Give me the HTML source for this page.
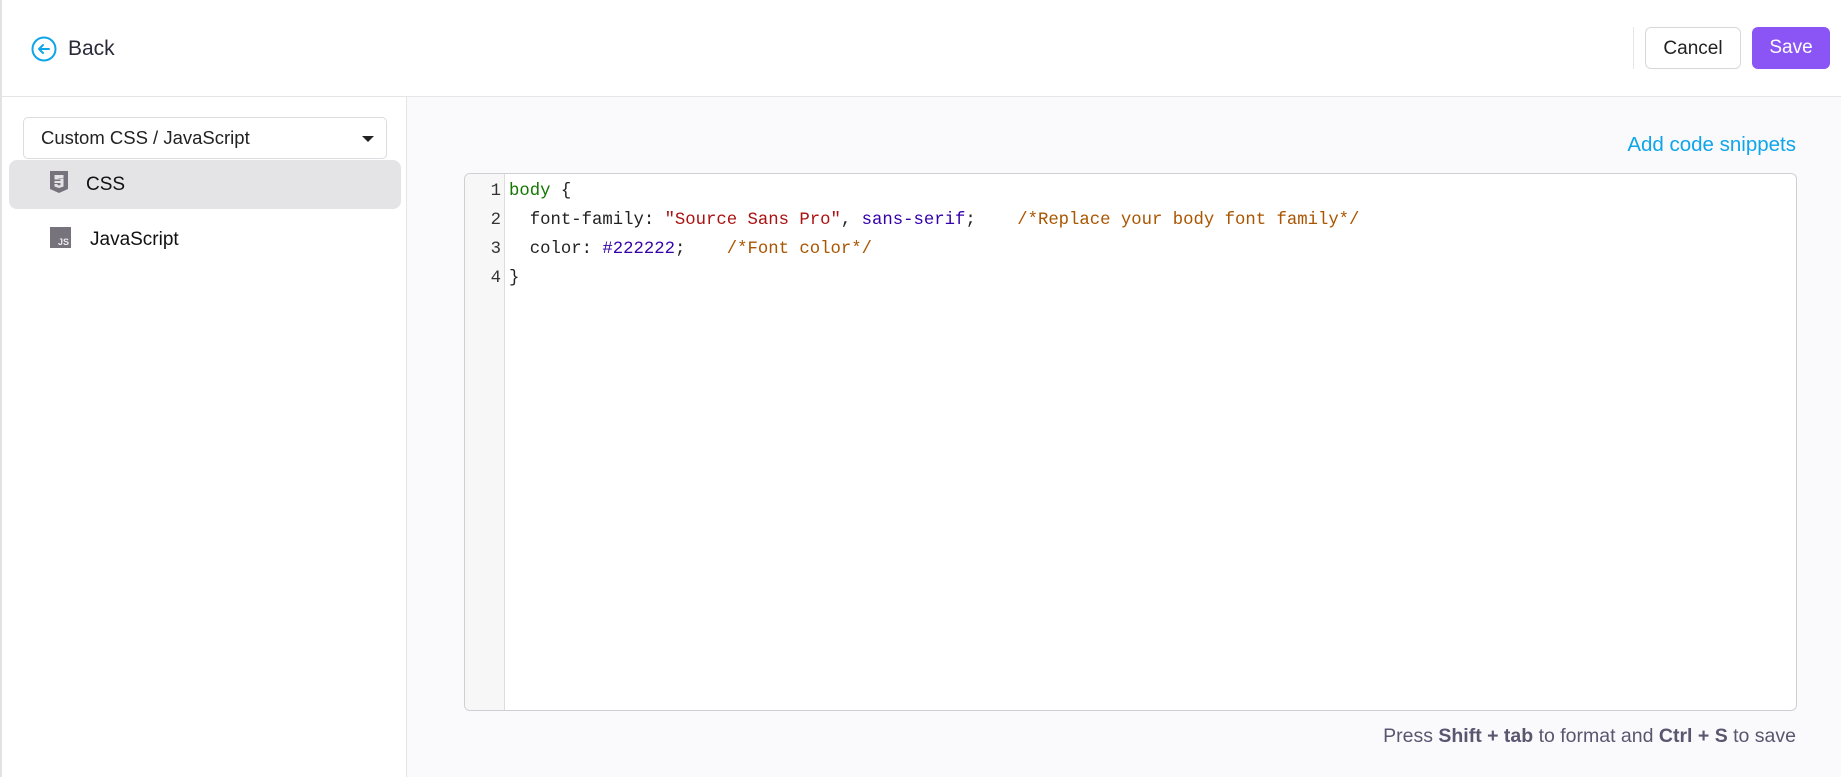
<!DOCTYPE html>
<html><head><style>
*{box-sizing:border-box;margin:0;padding:0}
body{width:1841px;height:777px;overflow:hidden;background:#fafafc;font-family:"Liberation Sans",sans-serif;position:relative}
.hdr{position:absolute;left:0;top:0;width:1841px;height:97px;background:#fff;border-bottom:1px solid #e5e5e8;border-left:2px solid #e2e2e2}
.side{position:absolute;left:0;top:97px;width:407px;height:680px;background:#fff;border-right:1px solid #e5e5e8;border-left:2px solid #e2e2e2}
.abs{position:absolute}
.code{font-family:"Liberation Mono",monospace;font-size:17.3px;line-height:29px;white-space:pre;color:#222}
</style></head><body>
<div class="hdr">
 <svg class="abs" style="left:29px;top:36px" width="26" height="26" viewBox="0 0 26 26"><circle cx="13" cy="13" r="11.5" fill="none" stroke="#0ea5e9" stroke-width="2"/><path d="M18 13H8M12 9l-4 4 4 4" fill="none" stroke="#0ea5e9" stroke-width="2" stroke-linecap="round" stroke-linejoin="round"/></svg>
 <div class="abs" style="left:66px;top:37px;font-size:21px;color:#2a2a3a">Back</div>
 <div class="abs" style="left:1631px;top:27px;width:1px;height:42px;background:#e5e5e5"></div>
 <div class="abs" style="left:1643px;top:27px;width:96px;height:42px;border:1px solid #d8d8dc;border-radius:6px;font-size:19px;color:#222;text-align:center;line-height:42px">Cancel</div>
 <div class="abs" style="left:1750px;top:27px;width:78px;height:42px;background:#8b55f5;border-radius:6px;font-size:19px;color:#fff;text-align:center;line-height:42px">Save</div>
</div>
<div class="side">
 <div class="abs" style="left:21px;top:20px;width:364px;height:42px;border:1px solid #dcdce0;border-radius:5px;font-size:18.5px;color:#222;line-height:40px;padding-left:17px">Custom CSS / JavaScript
  <div class="abs" style="right:12px;top:18px;width:0;height:0;border-left:6px solid transparent;border-right:6px solid transparent;border-top:6px solid #222"></div></div>
 <div class="abs" style="left:7px;top:63px;width:392px;height:49px;background:#e4e4e7;border-radius:8px"></div>
 <svg class="abs" style="left:48px;top:74px" width="18" height="22" viewBox="0 0 18 22"><path d="M0 0h18v18l-9 4-9-4z" fill="#76737d"/><path d="M4.5 4h9v3h-5v.5h5v8l-4.5 1.5-4.5-1.5v-2.5h3v1l1.5.5 1.5-.5v-2h-6v-2h6v-1.5h-6z" fill="#e4e4e7"/></svg>
 <div class="abs" style="left:84px;top:77px;font-size:19px;color:#111">CSS</div>
 <div class="abs" style="left:48px;top:130px;width:21px;height:21px;background:#76737d"><span style="position:absolute;right:2px;bottom:1px;font-size:9px;font-weight:bold;color:#eee">JS</span></div>
 <div class="abs" style="left:88px;top:132px;font-size:19px;color:#111">JavaScript</div>
</div>
<div class="abs" style="right:45px;top:133px;font-size:20.5px;color:#0ea5e9">Add code snippets</div>
<div class="abs" style="left:464px;top:173px;width:1333px;height:538px;background:#fff;border:1px solid #cfcfd3;border-radius:6px;overflow:hidden">
 <div class="abs" style="left:0;top:0;width:40px;height:100%;background:#f7f7f7;border-right:1px solid #ddd"></div>
 <div class="abs code" style="left:0;top:3px;width:36px;text-align:right;color:#333">1
2
3
4</div>
 <div class="abs code" style="left:44px;top:3px"><span style="color:#170">body</span> {
  font-family: <span style="color:#a11">"Source Sans Pro"</span>, <span style="color:#30a">sans-serif</span>;    <span style="color:#a50">/*Replace your body font family*/</span>
  color: <span style="color:#30a">#222222</span>;    <span style="color:#a50">/*Font color*/</span>
}</div>
</div>
<div class="abs" style="right:45px;top:725px;font-size:19.5px;color:#5b5670">Press <b>Shift + tab</b> to format and <b>Ctrl + S</b> to save</div>
</body></html>
